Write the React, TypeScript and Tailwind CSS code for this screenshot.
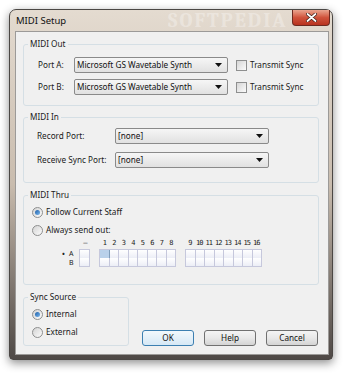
import React from 'react';

const font = { fontFamily: '"Noto Sans", "Open Sans", sans-serif' };

function Arrow() {
  return (
    <svg width="7" height="4" viewBox="0 0 7 4" className="shrink-0">
      <polygon points="0,0 7,0 3.5,4" fill="#111" />
    </svg>
  );
}

function Combo({ value, width = 'w-[154px]' }: { value: string; width?: string }) {
  return (
    <div
      className={`${width} flex h-[16px] items-center justify-between rounded-[2px] border border-[#8a8a8a] bg-gradient-to-b from-[#f6f6f6] to-[#e1e1e1] pl-[2px] pr-[5px] text-[8.2px] text-[#111]`}
    >
      <span className="leading-none">{value}</span>
      <Arrow />
    </div>
  );
}

function Checkbox() {
  return (
    <div className="flex h-[11px] w-[11px] items-center justify-center border border-[#8e8f8f] bg-white">
      <div className="h-[9px] w-[9px] bg-gradient-to-br from-[#d6d6d6] to-[#fbfbfb]" />
    </div>
  );
}

function Radio({ checked }: { checked?: boolean }) {
  return (
    <div className="flex h-[11px] w-[11px] shrink-0 items-center justify-center rounded-full border border-[#8e8f8f] bg-gradient-to-br from-[#d4d4d4] to-[#fcfcfc]">
      {checked && <div className="h-[5px] w-[5px] rounded-full bg-gradient-to-br from-[#1c5fa8] to-[#7ab8ee]" />}
    </div>
  );
}

function Group({ label, className, children }: { label: string; className: string; children: React.ReactNode }) {
  return (
    <div className={`relative rounded-[3px] border border-[#d5dfe5] ${className}`}>
      <span className="absolute left-[4px] top-[-7px] bg-[#f0f0f0] px-[2px] text-[8.2px] leading-[12px] text-[#1a1a1a]">
        {label}
      </span>
      {children}
    </div>
  );
}

function Button({ label, focused }: { label: string; focused?: boolean }) {
  return (
    <div
      className={`flex h-[16px] w-[52px] items-center justify-center rounded-[3px] border text-[8.2px] text-[#111] ${
        focused
          ? 'border-[#3c7fb1] bg-gradient-to-b from-[#f2f8fc] to-[#d6e8f5]'
          : 'border-[#707070] bg-gradient-to-b from-[#f4f4f4] via-[#e8e8e8] to-[#d4d4d4]'
      }`}
    >
      {label}
    </div>
  );
}

function Cell({ on }: { on?: boolean }) {
  return (
    <div
      className={`h-[9px] w-[9.5px] shrink-0 border-b border-r ${
        on ? 'border-[#7f9db9] bg-[#b9d1ea]' : 'border-[#c6c8dc] bg-gradient-to-b from-white to-[#eceef6]'
      }`}
    />
  );
}

const lo = [1, 2, 3, 4, 5, 6, 7, 8];
const hi = [9, 10, 11, 12, 13, 14, 15, 16];

function GridRow({ label, bullet, first }: { label: string; bullet?: boolean; first?: boolean }) {
  return (
    <div className="flex h-[9px] items-center">
      <div className="flex w-[21px] items-center text-[7px] text-[#222]">
        <span className="w-[11px] text-center text-[9px] leading-none">{bullet ? '•' : ''}</span>
        <span className="leading-none">{label}</span>
      </div>
      <div className={`flex ${first ? 'border-t' : ''} border-l border-[#c6c8dc]`}>
        <Cell />
      </div>
      <div className="w-[9.5px]" />
      <div className={`flex ${first ? 'border-t' : ''} border-l border-[#c6c8dc]`}>
        {lo.map((n) => (
          <Cell key={n} on={first && n === 1} />
        ))}
      </div>
      <div className="w-[9px]" />
      <div className={`flex ${first ? 'border-t' : ''} border-l border-[#c6c8dc]`}>
        {hi.map((n) => (
          <Cell key={n} />
        ))}
      </div>
    </div>
  );
}

export default function App() {
  return (
    <div className="relative h-[376px] w-[350px] overflow-hidden bg-white" style={font}>
      <div className="ml-[9px] mt-[9px] flex h-[351px] w-[324px] flex-col rounded-b-[4px] rounded-t-[7px] border border-[#4b4744] bg-gradient-to-b from-[#e4dbd0] via-[#c9bcae] to-[#4f4946] shadow-[0_3px_10px_rgba(0,0,0,0.45)]">
        {/* title bar */}
        <div className="relative flex h-[21px] items-start justify-between">
          <span className="pl-[6px] pt-[6px] text-[9.5px] leading-none text-[#111]">MIDI Setup</span>
          <span className="pointer-events-none absolute left-[158px] top-[1px] font-serif text-[20px] font-bold leading-none tracking-[2px] text-white opacity-30">
            SOFTPEDIA
          </span>
          <div className="mr-[2px] flex h-[16px] w-[38px] items-center justify-center rounded-b-[4px] border border-t-0 border-[#6e2a20] bg-gradient-to-b from-[#e9a48f] via-[#d0533c] to-[#b8321e]">
            <svg width="11" height="9" viewBox="0 0 11 9">
              <path d="M1.5 1 L9.5 8 M9.5 1 L1.5 8" stroke="#3a1a14" strokeWidth="3.2" strokeLinecap="round" />
              <path d="M1.5 1 L9.5 8 M9.5 1 L1.5 8" stroke="#fff" strokeWidth="1.8" strokeLinecap="round" />
            </svg>
          </div>
        </div>

        {/* client area */}
        <div className="ml-[5px] flex h-[324px] w-[314px] flex-col border border-[#9c9a98] bg-[#f0f0f0] pl-[7px] pt-[12px]">
          <Group label="MIDI Out" className="h-[62px] w-[296px] pl-[14px] pt-[12px]">
            <div className="flex flex-col gap-[6px]">
              {['Port A:', 'Port B:'].map((p) => (
                <div key={p} className="flex items-center">
                  <span className="w-[36px] text-[8.2px] text-[#1a1a1a]">{p}</span>
                  <Combo value="Microsoft GS Wavetable Synth" />
                  <div className="ml-[8px]">
                    <Checkbox />
                  </div>
                  <span className="ml-[3px] text-[8.2px] text-[#1a1a1a]">Transmit Sync</span>
                </div>
              ))}
            </div>
          </Group>

          <Group label="MIDI In" className="mt-[11px] h-[66px] w-[296px] pl-[13px] pt-[10px]">
            <div className="flex flex-col gap-[8px]">
              {['Record Port:', 'Receive Sync Port:'].map((p) => (
                <div key={p} className="flex items-center">
                  <span className="w-[78px] text-[8.2px] text-[#1a1a1a]">{p}</span>
                  <Combo value="[none]" />
                </div>
              ))}
            </div>
          </Group>

          <Group label="MIDI Thru" className="mt-[12px] h-[90px] w-[296px] pl-[8px] pt-[10px]">
            <div className="flex h-[12px] items-center gap-[3px] text-[8.2px] text-[#1a1a1a]">
              <Radio checked />
              <span>Follow Current Staff</span>
            </div>
            <div className="mt-[6px] flex h-[12px] items-center gap-[3px] text-[8.2px] text-[#1a1a1a]">
              <Radio />
              <span>Always send out:</span>
            </div>
            <div className="ml-[26px] mt-[3px] flex flex-col">
              <div
                className="flex h-[8px] items-center text-[7px] leading-none text-[#222]"
                style={{ fontFamily: '"DejaVu Sans Mono", monospace' }}
              >
                <div className="w-[22px]" />
                <div className="w-[10.5px] text-center">–</div>
                <div className="w-[9.5px]" />
                {lo.map((n) => (
                  <div key={n} className="w-[9.5px] text-center">
                    {n}
                  </div>
                ))}
                <div className="w-[9px]" />
                {hi.map((n) => (
                  <div key={n} className="w-[9.5px] text-center tracking-[-1px]">
                    {n}
                  </div>
                ))}
              </div>
              <div className="mt-[2px]">
                <GridRow label="A" bullet first />
                <GridRow label="B" />
              </div>
            </div>
          </Group>

          <div className="mt-[12px] flex items-end">
            <Group label="Sync Source" className="h-[49px] w-[106px] pl-[8px] pt-[10px]">
              <div className="flex h-[12px] items-center gap-[3px] text-[8.2px] text-[#1a1a1a]">
                <Radio checked />
                <span>Internal</span>
              </div>
              <div className="mt-[6px] flex h-[12px] items-center gap-[3px] text-[8.2px] text-[#1a1a1a]">
                <Radio />
                <span>External</span>
              </div>
            </Group>
            <div className="ml-[13px] flex gap-[10px]">
              <Button label="OK" focused />
              <Button label="Help" />
              <Button label="Cancel" />
            </div>
          </div>
        </div>
      </div>
    </div>
  );
}
